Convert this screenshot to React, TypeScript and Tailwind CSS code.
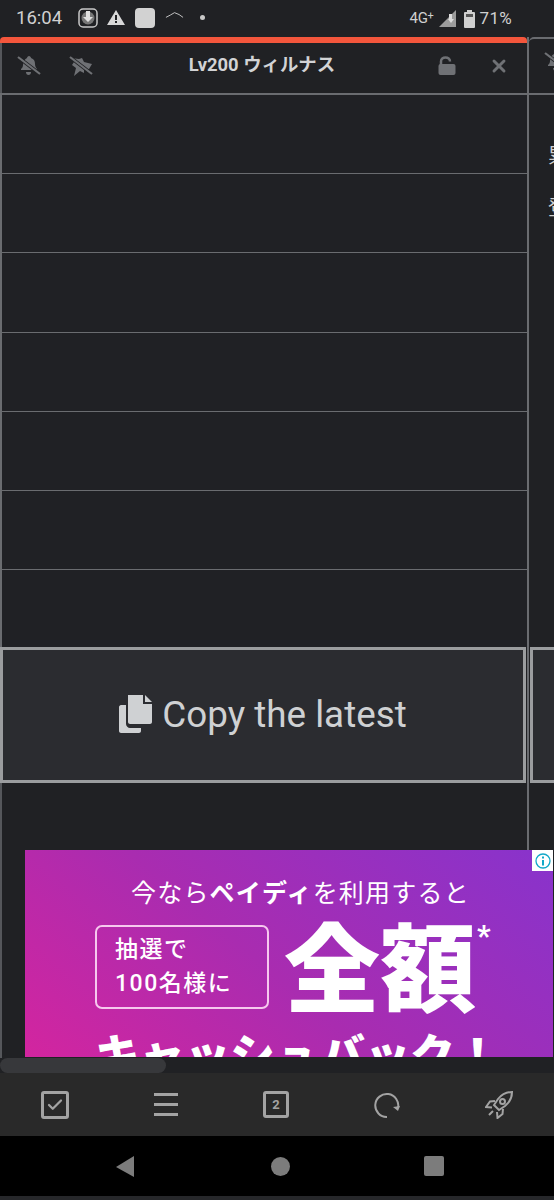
import React from "react";
import { Check, X } from "lucide-react";

const cjk = "font-['Roboto','Noto_Sans_CJK_JP',sans-serif]";

function BellSlash() {
  return (
    <svg width="24" height="20" viewBox="0 0 24 20" className="text-[#6f7175]" fill="currentColor">
      <path d="M12 0c1 0 2 1 2 2 3 1 4 3 4 6 0 2 1 4 2 5v1H4v-1c1-1 2-2 2-4 0-4 2-6 4-7 0-1 1-2 2-2z" />
      <path d="M9 16h5c0 2-1 3-2.500 3S9 18 9 16z" />
      <path d="M1 1l22 17" stroke="#202124" strokeWidth="3.500" />
      <path d="M1 1l22 17" stroke="currentColor" strokeWidth="2.200" />
    </svg>
  );
}

function PinSlash() {
  return (
    <svg width="24" height="20" viewBox="0 0 24 20" className="text-[#6f7175]" fill="currentColor">
      <path d="M2 2l8 1 3-1 2 4 8 2-3 5-5 1 0 3-4-2-6 5 2-8-4-3 2-3z" />
      <path d="M1 1l22 17" stroke="#202124" strokeWidth="3.500" />
      <path d="M1 1l22 17" stroke="currentColor" strokeWidth="2.200" />
    </svg>
  );
}

function Unlock() {
  return (
    <svg width="18" height="19" viewBox="0 0 18 19" className="text-[#6f7175]" fill="none">
      <path d="M3 9V5.500C3 3 5 1.500 7.500 1.500S12 3 12 5.500" stroke="currentColor" strokeWidth="2.500" />
      <rect x="0.500" y="8" width="17" height="11" rx="2" fill="currentColor" />
    </svg>
  );
}

function StatusBar() {
  return (
    <div className="flex h-[37px] shrink-0 items-center bg-[#202124] pl-4 pr-[42px] text-[#d0d0d0]">
      <span className="w-[62px] text-[18.500px] leading-none">16:04</span>
      <svg width="20" height="20" viewBox="0 0 20 20" className="-mt-0.5" fill="none">
        <rect x="1" y="1" width="18" height="18" rx="4" stroke="#c8c8c8" strokeWidth="1.500" />
        <circle cx="10" cy="10" r="6.500" fill="#777" />
        <path d="M8 3h4v6h3l-5 5-5-5h3z" fill="#e0e0e0" />
      </svg>
      <svg width="18" height="17" viewBox="0 0 18 17" className="ml-[9px] -mt-0.5">
        <path d="M9 1l9 15H0z" fill="#d8d8d8" />
        <path d="M8 6h2v5H8zM8 12h2v2H8z" fill="#202124" />
      </svg>
      <div className="ml-[10px] -mt-0.5 h-5 w-5 rounded-[4px] bg-[#d2d2d2]" />
      <svg width="19" height="8" viewBox="0 0 20 8" fill="none" className="ml-[10px] -mt-2">
        <path d="M1 6.500Q6 4 10 1.500Q15 3 19 6.500" stroke="#c8c8c8" strokeWidth="1" />
      </svg>
      <div className="ml-[16px] -mt-0.5 h-[5px] w-[5px] rounded-full bg-[#c8c8c8]" />
      <div className="ml-auto flex items-center">
        <span className="flex items-start text-[15px] leading-none tracking-[-0.3px]">
          4G<span className="-mt-[1px] text-[11px] leading-none">+</span>
        </span>
        <svg width="17" height="17" viewBox="0 0 17 17" className="ml-[5px]">
          <path d="M0 17L17 0v17z" fill="#9c9c9c" />
          <path d="M10 4h3v5h2l-3 4-3-4h1z" fill="#dcdcdc" />
        </svg>
        <svg width="11" height="18" viewBox="0 0 11 18" className="ml-[8px]">
          <rect x="3" y="0" width="5" height="2" fill="#d0d0d0" />
          <rect x="0" y="2" width="11" height="16" rx="1" fill="#d0d0d0" />
          <rect x="2" y="4" width="7" height="3" fill="#555" />
        </svg>
        <span className="ml-[5px] text-[17px] leading-none tracking-[0.3px]">71%</span>
      </div>
    </div>
  );
}

function MainColumn() {
  return (
    <div className="flex w-[527px] shrink-0 flex-col">
      <div className="h-[6px] shrink-0 rounded-t-[4px] bg-[#f4563c]" />
      <div className="flex h-[50px] shrink-0 items-center border-l-2 border-[#55575b] pb-[5px] pl-[15px] pr-[18px] text-[#6f7175]">
        <BellSlash />
        <span className="ml-[28px] flex">
          <PinSlash />
        </span>
        <span className={`ml-[94px] w-[150px] whitespace-nowrap text-center text-[18.400px] font-bold leading-none text-[#d2d3d5] ${cjk}`}>
          Lv200 ウィルナス
        </span>
        <span className="ml-auto flex">
          <Unlock />
        </span>
        <X size={20} strokeWidth={3.500} className="ml-[33px]" />
      </div>
      <div className="flex h-[554px] shrink-0 flex-col border-l-2 border-t-2 border-[#6a6c70] bg-[#202125]">
        {[0, 1, 2, 3, 4, 5].map((i) => (
          <div key={i} className="h-[79.200px] shrink-0 border-b border-[#6a6c70]" />
        ))}
      </div>
      <button className="flex h-[136px] w-[526px] shrink-0 items-center justify-center gap-[10px] border-[3px] border-[#9b9d9f] bg-[#2b2c30] text-[#cfd1d3]">
        <svg width="33" height="38" viewBox="0 0 33 38" fill="currentColor" className="-mt-[2px]">
          <path d="M9 0h15v9h9v18c0 1-1 2-2 2H11c-1 0-2-1-2-2z" />
          <path d="M26 0l7 7h-7z" />
          <path d="M0 12c0-1 1-2 2-2h5v19c0 2 2 4 4 4h11v3c0 1-1 2-2 2H2c-1 0-2-1-2-2z" />
        </svg>
        <span className="text-[36.800px] font-normal leading-none">Copy the latest</span>
      </button>
    </div>
  );
}

function SideColumn() {
  return (
    <div className="flex flex-1 flex-col overflow-hidden">
      <div className="h-[6px] shrink-0 rounded-tl-[5px] border-t-2 border-[#6a6c70]" />
      <div className="relative h-[50px] shrink-0">
        <span className="absolute left-[15px] top-[9px] flex">
          <BellSlash />
        </span>
      </div>
      <div className={`flex h-[554px] shrink-0 flex-col gap-[30px] border-t-2 border-[#6a6c70] pl-[19px] pt-[50px] text-[20px] leading-[22px] text-[#d0d0d0] ${cjk}`}>
        <span className="whitespace-nowrap">累</span>
        <span className="whitespace-nowrap">登</span>
      </div>
      <div className="ml-px h-[136px] shrink-0 border-y-[3px] border-l-[3px] border-[#9b9d9f] bg-[#2b2c30]" />
    </div>
  );
}

function Ad() {
  return (
    <div className={`relative ml-[23px] h-[207px] flex-1 overflow-hidden bg-[linear-gradient(40deg,#d3259f_0%,#a92cb0_45%,#8833cc_100%)] text-white ${cjk}`}>
      <div className="absolute right-0 top-0 flex h-[21px] w-[21px] items-center justify-center bg-white">
        <svg width="16" height="16" viewBox="0 0 16 16" fill="none">
          <circle cx="8" cy="8" r="7" stroke="#12a8c8" strokeWidth="1.300" />
          <path d="M8 3.500v2M8 7v5.500" stroke="#12a8c8" strokeWidth="2" />
        </svg>
      </div>
      <div className="mt-[29px] whitespace-nowrap pl-[106px] text-[25px] leading-[30px] tracking-[1.200px]">
        今なら<span className="font-bold">ペイディ</span>を利用すると
      </div>
      <div className="mt-[16px] flex items-start pl-[70px]">
        <div className="flex h-[84px] w-[174px] shrink-0 flex-col justify-center rounded-[7px] border-2 border-[#f6c8ee] pl-[18px] text-[23px] font-medium leading-[34px] tracking-[1.500px]">
          <span>抽選で</span>
          <span>100名様に</span>
        </div>
        <div className="ml-[15px] -mt-[2px] whitespace-nowrap text-[96px] font-black leading-[96px]">全額</div>
        <div className="ml-[1px] -mt-[4px] text-[30px] font-bold leading-none">*</div>
      </div>
      <div className="mt-[10px] whitespace-nowrap pl-[70px] text-[45px] font-black leading-[56px]">キャッシュバック！</div>
    </div>
  );
}

function Toolbar() {
  const cls = "text-[#a3a3a3]";
  return (
    <div className="relative flex h-[63px] shrink-0 items-center justify-between bg-[#292929] pl-[41px] pr-[41px]">
      <div className="flex h-7 w-7 items-center justify-center rounded-[3px] border-[3px] border-[#a3a3a3] text-[#a3a3a3]">
        <Check size={18} strokeWidth={3} />
      </div>
      <div className="flex flex-col gap-[7px]">
        <div className="h-[3px] w-6 bg-[#a3a3a3]" />
        <div className="h-[3px] w-6 bg-[#a3a3a3]" />
        <div className="h-[3px] w-6 bg-[#a3a3a3]" />
      </div>
      <div className="flex h-[27px] w-[26px] items-center justify-center rounded-[3px] border-[3px] border-[#a3a3a3] text-[13px] font-bold leading-none text-[#a3a3a3]">
        2
      </div>
      <svg width="26" height="26" viewBox="0 0 26 26" fill="none" className={cls}>
        <path d="M13 25a11.500 11.500 0 1 1 11-9" stroke="currentColor" strokeWidth="2" />
        <path d="M19 15l5 4 2-5z" fill="currentColor" />
      </svg>
      <svg width="28" height="28" viewBox="0 0 28 28" fill="none" stroke="currentColor" strokeWidth="2" className={cls}>
        <path d="M27 1c-5 0-10 2-14 7l-4 6 5 5 6-4c5-4 7-9 7-14z" />
        <circle cx="17.500" cy="10.500" r="2.500" />
        <path d="M10 10l-5 .5L1 16l6 .5M18 18l-.5 5-5 4-.5-6M8 20l-4 4" />
      </svg>
    </div>
  );
}

function NavBar() {
  return (
    <div className="flex h-[60px] shrink-0 items-center bg-black pl-[116px]">
      <svg width="18" height="21" viewBox="0 0 18 21" fill="#7c7c7c">
        <path d="M18 0v21L0 11z" />
      </svg>
      <div className="ml-[137px] h-[19px] w-[19px] rounded-full bg-[#7c7c7c]" />
      <div className="ml-[134px] h-5 w-5 rounded-[2px] bg-[#7c7c7c]" />
    </div>
  );
}

export default function App() {
  return (
    <div className="flex h-[1200px] w-[554px] flex-col overflow-hidden bg-[#202124] font-['Roboto',sans-serif]">
      <StatusBar />
      <div className="flex h-[746px] shrink-0">
        <MainColumn />
        <div className="w-[2px] shrink-0 bg-[#6a6c70]" />
        <SideColumn />
      </div>
      {/* gap under the button, down to the ad */}
      <div className="flex h-[275px] shrink-0 flex-col">
        <div className="flex h-[67px] shrink-0">
          <div className="w-[2px] bg-[#55575b]" />
          <div className="ml-[525px] w-[2px] bg-[#6a6c70]" />
        </div>
        <div className="flex h-[208px] shrink-0">
          <div className="w-[2px] shrink-0 bg-[#55575b]" />
          <Ad />
          <div className="w-px shrink-0 bg-[#202124]" />
        </div>
      </div>
      <div className="flex h-[15px] shrink-0 bg-[#202124]">
        <div className="h-[15px] w-[166px] rounded-full bg-[#37383b]" />
      </div>
      <Toolbar />
      <NavBar />
      <div className="flex-1 bg-[#26272a]" />
    </div>
  );
}
